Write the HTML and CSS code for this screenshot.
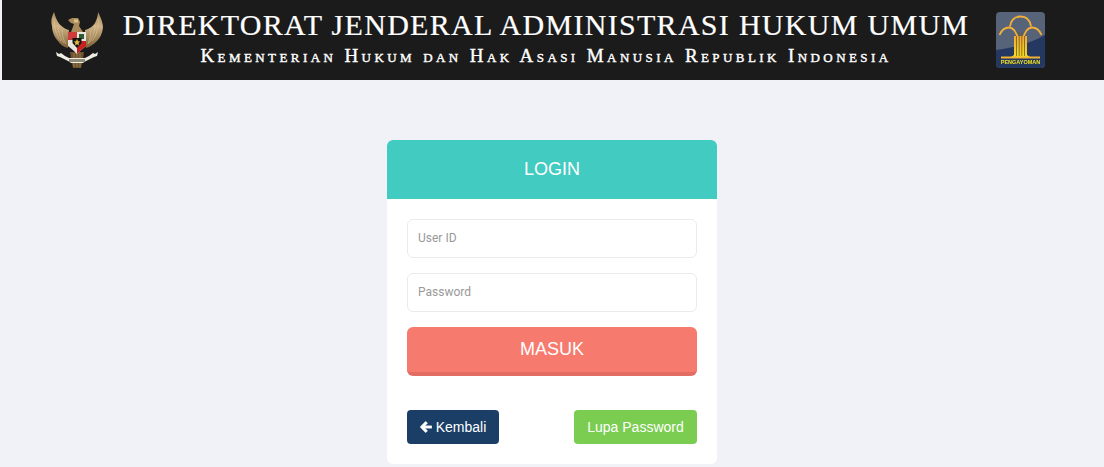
FILE: index.html
```html
<!DOCTYPE html>
<html lang="id">
<head>
<meta charset="utf-8">
<title>Login</title>
<link rel="stylesheet" href="styles.css">
</head>
<body>
<header class="banner">
  <svg class="emblem" viewBox="0 0 54 58" aria-hidden="true">
    <defs>
      <linearGradient id="gold" x1="0" y1="0" x2="0" y2="1">
        <stop offset="0" stop-color="#a88a5c"/>
        <stop offset="0.4" stop-color="#cfb284"/>
        <stop offset="1" stop-color="#7d5f38"/>
      </linearGradient>
    </defs>
    <path fill="url(#gold)" d="M4 2C1 8 1 12 2 16C2 22 5 28 8 31C10 34 13 37 18 38L19 20C14 19 10 15 8 12C6 9 5 5 4 2Z"/>
    <path fill="url(#gold)" d="M48 2C51 8 53 13 53 18C52 24 50 28 47 31C44 34 40 37 36 38L35 20C40 19 44 15 45 13C47 9 48 5 48 2Z"/>
    <path fill="none" stroke="#e4d0a6" stroke-opacity=".5" stroke-width="1" d="M4 8C4 16 6 25 11 31M8 15C8 21 10 27 14 33M12 19C12 24 13 29 16 34M48 8C49 16 47 25 42 31M45 15C45 21 43 27 39 33M41 19C41 24 40 29 38 34"/>
    <path fill="#a98a58" d="M18 10L22 8L28 8L30 12L29 16L33 22H21L24 14L21 13Z"/>
    <path fill="#d8c18f" d="M24 9.500H28V12.500H24Z"/>
    <path fill="#6f5330" d="M20 42L34 42L33 49L31 58H23L21 49Z"/>
    <path fill="none" stroke="#a58755" stroke-width=".8" d="M24 43V57M27 43V57M30 43V57"/>
    <path fill="#e8e6dc" d="M18 22H36V36L30 41L27 44L24 41L18 36Z"/>
    <path fill="#cf3a3a" d="M18 22H27V30H18Z"/>
    <path fill="#2d5b33" d="M29 24H34V29H29Z"/>
    <path fill="#c81f1f" d="M27 31H36V36L30 41L27 44Z"/>
    <path fill="#121212" d="M22.500 28H31.500V33L27 38L22.500 33Z"/>
    <path fill="#e0b83c" d="M27 28.800L28 31.200L30.300 31.500L28.600 33L29 35.400L27 34.200L25 35.400L25.400 33L23.700 31.500L26 31.200Z"/>
    <path fill="#f0ede4" d="M6 42L9 44L11 43L15 46L19 48H35L39 46L43 43L45 44L48 42L47 46L44 47L40 49L35 51.500L33 53H21L19 51.500L14 49L10 47L7 46Z"/>
    <path fill="#8f8a78" d="M19 49H35V52H19Z"/>
  </svg>
  <div class="banner-text">
    <div class="banner-title">DIREKTORAT JENDERAL ADMINISTRASI HUKUM UMUM</div>
    <div class="banner-sub">Kementerian Hukum dan Hak Asasi Manusia Republik Indonesia</div>
  </div>
  <svg class="pengayoman" viewBox="0 0 49 56" aria-hidden="true">
    <defs>
      <linearGradient id="yel" x1="0" y1="0" x2="0" y2="1">
        <stop offset="0" stop-color="#f0a63a"/>
        <stop offset="1" stop-color="#f6dd1e"/>
      </linearGradient>
    </defs>
    <rect x="0" y="0" width="49" height="56" rx="4" fill="#566379"/>
    <path d="M0 38C14 36 34 32 49 23V52C49 54 47 56 45 56H4C2 56 0 54 0 52Z" fill="#253862"/>
    <g fill="none" stroke="#f2b038" stroke-width="1.800">
      <path d="M3.500 23C6 17 10 15.500 13 15.500C17 15.500 21 20 22 28"/>
      <path d="M45.500 23C43 17 39 15.500 36 15.500C32 15.500 28 20 27 28"/>
      <path d="M14 14.500C15 8 19 4.500 24.500 4.500C30 4.500 34 8 35 14.500"/>
    </g>
    <path d="M18 24H31V43L34 45H15L18 43Z" fill="url(#yel)"/>
    <path d="M20.500 24V44M23.200 20V44M25.800 20V44M28.500 24V44" stroke="#6d5a1f" stroke-width=".8"/>
    <path d="M5 45.500H44" stroke="#f2b431" stroke-width="1.800"/>
    <text class="peng-label" x="24.500" y="52" text-anchor="middle">PENGAYOMAN</text>
  </svg>
</header>

<main class="page">
  <section class="card">
    <h1 class="card-head">LOGIN</h1>
    <form class="card-body">
      <input class="field" type="text" placeholder="User ID">
      <input class="field" type="password" placeholder="Password">
      <button class="submit" type="button">MASUK</button>
      <div class="actions">
        <a class="btn btn-back" href="#">
          <svg class="arrow" viewBox="0.300 1 13 12.200" aria-hidden="true"><path d="M6.800 1.200L8.300 2.700C8.500 2.900 8.500 3.200 8.300 3.400L5.700 5.700H12.500C12.900 5.700 13.200 6 13.200 6.400V7.800C13.200 8.200 12.900 8.500 12.500 8.500H5.700L8.300 10.800C8.500 11 8.500 11.300 8.300 11.500L6.800 13C6.600 13.200 6.300 13.200 6.100 13L0.600 7.500C0.300 7.200 0.300 6.900 0.600 6.700L6.100 1.200C6.300 1 6.600 1 6.800 1.200Z"/></svg>
          Kembali
        </a>
        <a class="btn btn-forgot" href="#">Lupa Password</a>
      </div>
    </form>
  </section>
</main>
</body>
</html>
```

FILE: styles.css
```css
* { box-sizing: border-box; }

html, body { margin: 0; height: 100%; }

body {
  background: #f0f2f8;
  font-family: "Liberation Sans", Arial, sans-serif;
  overflow: hidden;
}

.banner {
  margin-left: 2px;
  height: 80px;
  background: #1b1b1b;
  display: flex;
  align-items: flex-start;
  color: #fff;
}

.emblem {
  width: 54px;
  height: 58px;
  margin: 10px 0 0 48px;
  flex: none;
  filter: blur(0.4px);
}

.banner-text {
  width: 860px;
  margin-left: 12px;
  text-align: center;
  font-family: "Liberation Serif", "Times New Roman", serif;
  flex: none;
}

.banner-title {
  font-size: 30px;
  line-height: 36px;
  margin-top: 7px;
  letter-spacing: 1.29px;
  white-space: nowrap;
  -webkit-text-stroke: 0.2px #fff;
}

.banner-sub {
  font-size: 19px;
  line-height: 24px;
  margin-top: 1px;
  font-variant: small-caps;
  letter-spacing: 3.42px;
  white-space: nowrap;
  -webkit-text-stroke: 0.4px #fff;
}

.pengayoman {
  width: 49px;
  height: 56px;
  margin: 12px 0 0 20px;
  flex: none;
  filter: blur(0.3px);
}

.peng-label {
  font-family: "Liberation Sans", Arial, sans-serif;
  font-size: 5.500px;
  font-weight: bold;
  fill: #f2e21c;
}

.page {
  display: flex;
  justify-content: center;
  padding: 60px 0 0 0;
}

.card {
  width: 330px;
  height: 324px;
  background: #fff;
  border-radius: 6px;
  overflow: hidden;
}

.card-head {
  margin: 0;
  height: 59px;
  line-height: 58px;
  background: #42cbc1;
  color: #fff;
  text-align: center;
  font-size: 18px;
  font-weight: normal;
}

.card-body {
  display: flex;
  flex-direction: column;
  padding: 20px 20px 0;
}

.field {
  width: 100%;
  height: 39px;
  margin-bottom: 15px;
  padding: 0 10px 2px;
  border: 1px solid #e8eaed;
  border-radius: 6px;
  background: #fff;
  font-family: Roboto, sans-serif;
  font-size: 12px;
  outline: none;
}

.field::placeholder { color: #999; opacity: 1; }

.submit {
  height: 49px;
  border: 0;
  border-bottom: 4px solid #e36d63;
  border-radius: 6px;
  background: #f77a6e;
  color: #fff;
  font-family: "Liberation Sans", Arial, sans-serif;
  font-size: 18px;
  padding: 0;
}

.actions {
  display: flex;
  justify-content: space-between;
  margin-top: 34px;
}

.btn {
  display: flex;
  align-items: center;
  justify-content: center;
  height: 34px;
  border-radius: 4px;
  color: #fff;
  font-size: 14px;
  text-decoration: none;
}

.btn-back {
  width: 92px;
  background: #1a3e66;
  gap: 4px;
}

.btn-forgot {
  width: 123px;
  background: #7acd50;
}

.arrow {
  width: 12px;
  height: 12px;
  fill: #fff;
  stroke: #fff;
  stroke-width: 0.4;
  flex: none;
}
```
